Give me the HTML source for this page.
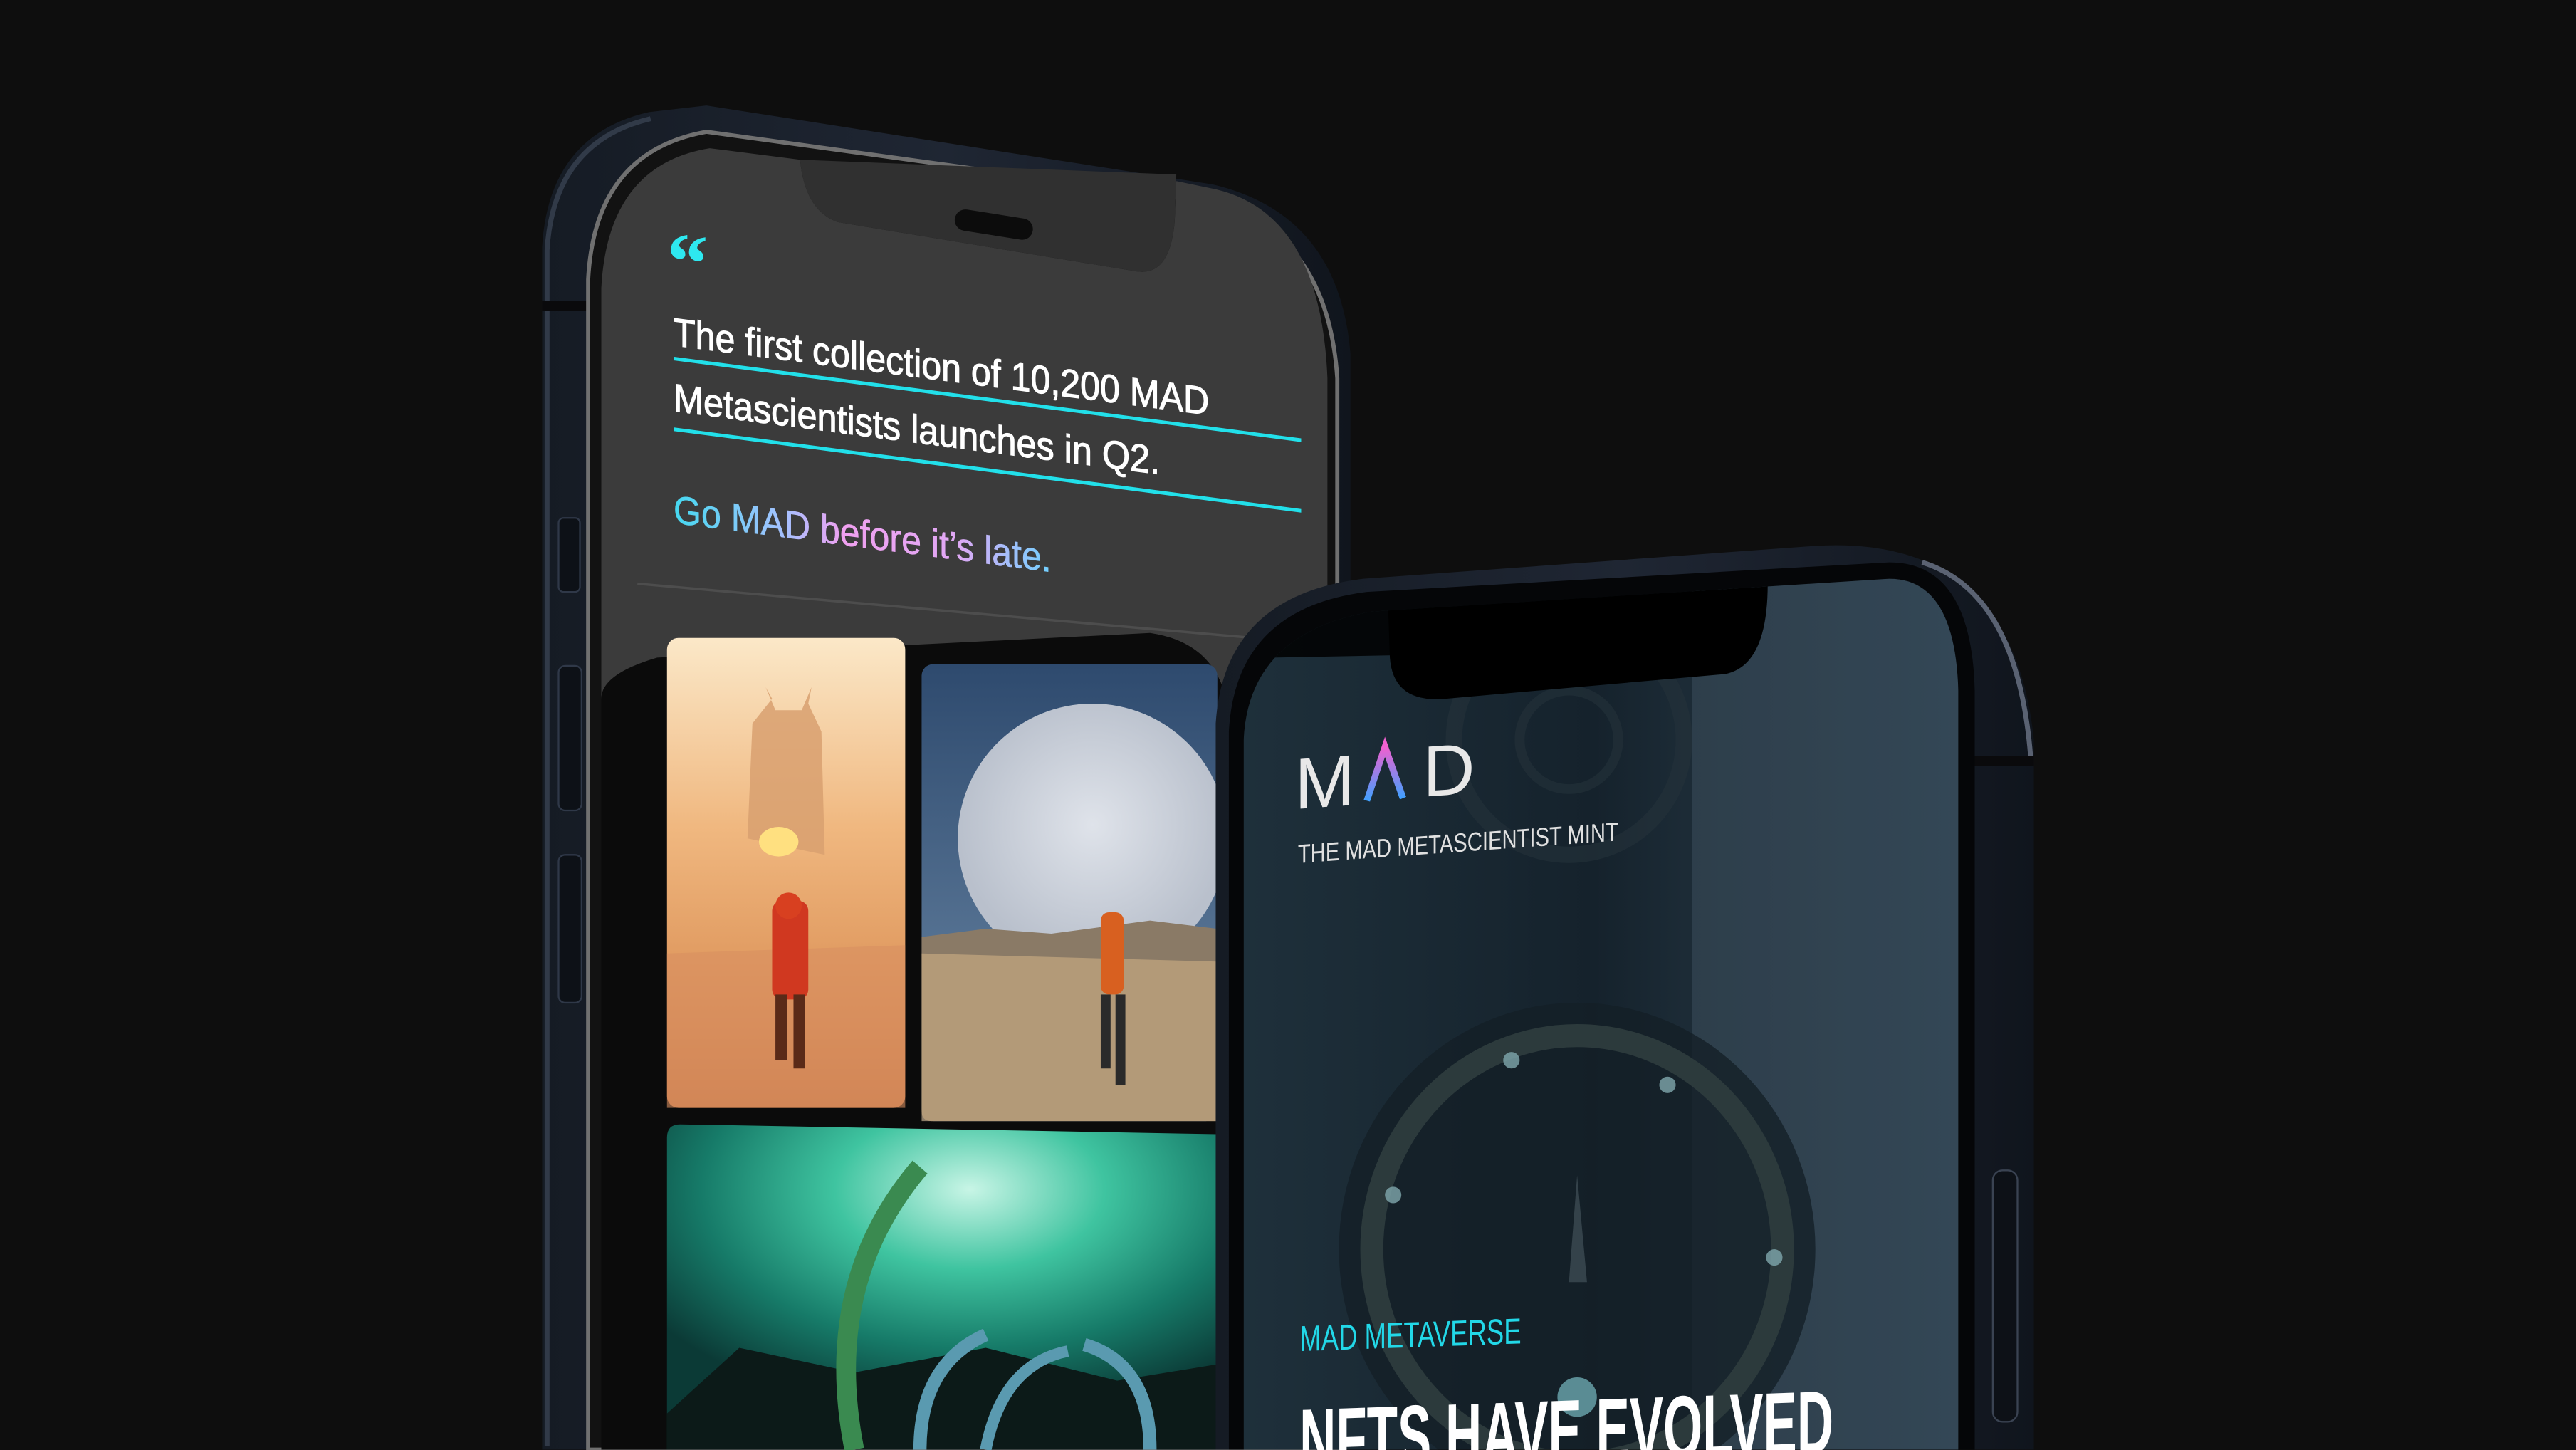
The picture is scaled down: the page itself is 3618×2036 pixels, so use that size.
<!DOCTYPE html>
<html><head><meta charset="utf-8"><style>
html,body{margin:0;padding:0;background:#0e0e0e;width:3618px;height:2036px;overflow:hidden}
svg{display:block}
</style></head><body>
<svg width="3618" height="2036" viewBox="0 0 1568 882" xmlns="http://www.w3.org/2000/svg">
<defs>
<linearGradient id="go" x1="0" x2="1"><stop offset="0" stop-color="#45d8f0"/><stop offset="0.3" stop-color="#a8c0ff"/><stop offset="0.45" stop-color="#f0a0f0"/><stop offset="0.75" stop-color="#e0a8f4"/><stop offset="1" stop-color="#70d0ff"/></linearGradient>
<linearGradient id="la" x1="0" y1="0" x2="0" y2="1"><stop offset="0" stop-color="#f060d0"/><stop offset="1" stop-color="#40a0ff"/></linearGradient>
<linearGradient id="rs" x1="0" y1="0" x2="1" y2="0"><stop offset="0" stop-color="#1f313c"/><stop offset="0.5" stop-color="#15222c"/><stop offset="0.62" stop-color="#1c2b36"/><stop offset="1" stop-color="#243745"/></linearGradient>
<linearGradient id="des" x1="0" y1="0" x2="0" y2="1"><stop offset="0" stop-color="#fbe8c8"/><stop offset="0.4" stop-color="#f0b880"/><stop offset="0.7" stop-color="#e09a60"/><stop offset="1" stop-color="#c87848"/></linearGradient>
<linearGradient id="sky" x1="0" y1="0" x2="0" y2="1"><stop offset="0" stop-color="#2e4a6e"/><stop offset="1" stop-color="#6d8aa8"/></linearGradient>
<radialGradient id="moon" cx="0.5" cy="0.45" r="0.5"><stop offset="0" stop-color="#dfe3ea"/><stop offset="1" stop-color="#b9c0cc"/></radialGradient>
<radialGradient id="neb" cx="0.55" cy="0.2" r="0.7"><stop offset="0" stop-color="#c8f5e6"/><stop offset="0.35" stop-color="#3fc4a0"/><stop offset="0.7" stop-color="#167a68"/><stop offset="1" stop-color="#0b3a36"/></radialGradient>
<linearGradient id="frame" x1="0" x2="1"><stop offset="0" stop-color="#151b24"/><stop offset="0.5" stop-color="#1f2633"/><stop offset="1" stop-color="#10151d"/></linearGradient>
<clipPath id="rsc"><path d="M757,882 L757,450 Q760,385 835,372 L1150,352 Q1190,352 1192,420 L1192,882 Z"/></clipPath>
</defs>
<rect width="1568" height="882" fill="#0e0e0e"/>

<!-- LEFT PHONE -->
<path d="M330,882 L330,150 Q334,82 395,68 L430,64 L738,112 Q815,130 822,215 L822,882 Z" fill="url(#frame)"/>
<path d="M333,880 L333,152 Q337,86 396,72" stroke="#313a48" stroke-width="3" fill="none"/>
<rect x="330" y="183" width="33" height="6" fill="#0a0a0c"/>
<rect x="340" y="315" width="13" height="45" rx="3" fill="#0d1117" stroke="#2f3848"/>
<rect x="340" y="405" width="14" height="88" rx="4" fill="#0d1117" stroke="#2f3848"/>
<rect x="340" y="520" width="14" height="90" rx="4" fill="#0d1117" stroke="#2f3848"/>
<path d="M358,882 L358,170 Q362,92 430,80 L735,122 Q808,140 814,230 L814,882 Z" fill="#121212" stroke="#707070" stroke-width="2.5"/>
<path d="M366,882 L366,175 Q370,100 432,90 L487,97 Q490,128 510,135 L692,165 Q712,168 715,135 L716,110 L740,115 Q804,130 808,230 L808,882 Z" fill="#3b3b3b"/>
<path d="M487,97 Q490,128 510,135 L692,165 Q712,168 715,135 L716,106 Z" fill="#303030"/>
<rect x="581" y="130" width="48" height="13" rx="6.5" fill="#0c0c0c" transform="rotate(9 605 136)"/>
<g transform="matrix(1,0.13,0,1,0,-53.3)">
<text x="406" y="175" font-family="Liberation Serif,serif" font-weight="bold" font-size="50" fill="#2ee8f0">“</text>
<text x="410" y="210" font-family="Liberation Sans,sans-serif" font-size="24" fill="#fff" stroke="#fff" stroke-width="0.5" textLength="326" lengthAdjust="spacingAndGlyphs">The first collection of 10,200 MAD</text>
<line x1="410" y1="218" x2="792" y2="218" stroke="#22e0ea" stroke-width="2.2"/>
<text x="410" y="250" font-family="Liberation Sans,sans-serif" font-size="24" fill="#fff" stroke="#fff" stroke-width="0.5" textLength="296" lengthAdjust="spacingAndGlyphs">Metascientists launches in Q2.</text>
<line x1="410" y1="261" x2="792" y2="261" stroke="#22e0ea" stroke-width="2.2"/>
<text x="410" y="318" font-family="Liberation Sans,sans-serif" font-size="24" fill="url(#go)" stroke="url(#go)" stroke-width="0.3" textLength="230" lengthAdjust="spacingAndGlyphs">Go MAD before it’s late.</text>
</g>
<line x1="388" y1="355" x2="808" y2="392" stroke="#4d4d4d" stroke-width="1.5"/>
<path d="M366,882 L366,425 Q366,410 400,400 L700,385 Q735,390 745,420 L745,882 Z" fill="#0b0b0b"/>
<g>
<rect x="406" y="388" width="145" height="286" rx="7" fill="url(#des)"/>
<path d="M406,580 L551,575 L551,674 L406,674 Z" fill="#d89060" opacity="0.6"/>
<path d="M455,510 L458,440 L470,425 L466,418 L472,432 L488,432 L494,418 L492,428 L500,445 L502,520 Z" fill="#d8a070" opacity="0.85"/>
<ellipse cx="474" cy="512" rx="12" ry="9" fill="#ffe080"/>
<rect x="470" y="548" width="22" height="60" rx="6" fill="#d03820"/>
<circle cx="480" cy="551" r="8" fill="#d84020"/>
<rect x="472" y="605" width="7" height="40" fill="#5a2a18"/>
<rect x="483" y="605" width="7" height="45" fill="#5a2a18"/>
</g>
<g>
<rect x="561" y="404" width="180" height="278" rx="7" fill="url(#sky)"/>
<circle cx="665" cy="510" r="82" fill="url(#moon)"/>
<path d="M561,570 L600,565 L640,568 L700,560 L741,565 L741,682 L561,682 Z" fill="#8a7a66"/>
<path d="M561,580 L741,585 L741,682 L567,682 Q561,682 561,676 Z" fill="#b39a78"/>
<rect x="670" y="555" width="14" height="50" rx="5" fill="#d86020"/>
<rect x="670" y="605" width="6" height="45" fill="#2a2a2a"/><rect x="679" y="605" width="6" height="55" fill="#2a2a2a"/>
</g>
<g>
<path d="M406,692 Q406,684 414,684 L741,690 L741,882 L406,882 Z" fill="url(#neb)"/>
<path d="M406,860 L450,820 L520,835 L600,820 L680,840 L741,830 L741,882 L406,882 Z" fill="#0c1a18"/>
<path d="M520,882 Q500,780 560,710" stroke="#3a8a50" stroke-width="12" fill="none"/>
<path d="M560,882 Q560,830 600,812" stroke="#5a9ab0" stroke-width="8" fill="none"/>
<path d="M600,882 Q610,830 650,822" stroke="#5a9ab0" stroke-width="7" fill="none"/>
<path d="M700,882 Q700,830 660,818" stroke="#5a9ab0" stroke-width="8" fill="none"/>
</g>

<!-- RIGHT PHONE -->
<path d="M740,882 L740,440 Q745,362 830,352 L1105,332 Q1225,325 1238,450 L1238,882 Z" fill="url(#frame)"/>
<path d="M1170,342 Q1228,360 1236,460" stroke="#5a6272" stroke-width="3" fill="none"/>
<rect x="1200" y="460" width="38" height="6" fill="#0a0a0c"/>
<rect x="1213" y="712" width="15" height="153" rx="6" fill="#0d1117" stroke="#3a4352"/>
<path d="M748,882 L748,445 Q752,370 832,360 L1150,342 Q1200,342 1202,420 L1202,882 Z" fill="#050608"/>
<g clip-path="url(#rsc)">
<rect x="740" y="340" width="460" height="560" fill="url(#rs)"/>
<rect x="1030" y="340" width="170" height="560" fill="#6d8696" opacity="0.22"/>
<circle cx="955" cy="450" r="70" fill="none" stroke="#24323b" stroke-width="10" opacity="0.6"/>
<circle cx="955" cy="450" r="30" fill="none" stroke="#24323b" stroke-width="6" opacity="0.6"/>
<ellipse cx="960" cy="760" rx="145" ry="150" fill="#141f27" opacity="0.8"/>
<ellipse cx="960" cy="760" rx="125" ry="130" fill="none" stroke="#2c3a3c" stroke-width="14"/>
<circle cx="920" cy="645" r="5" fill="#7fa8ac" opacity="0.8"/><circle cx="1015" cy="660" r="5" fill="#7fa8ac" opacity="0.8"/>
<circle cx="848" cy="727" r="5" fill="#7fa8ac" opacity="0.8"/><circle cx="1080" cy="765" r="5" fill="#7fa8ac" opacity="0.8"/>
<circle cx="960" cy="850" r="12" fill="#5a8c94"/>
<path d="M955,780 L960,715 L966,780 Z" fill="#34424a"/>
<path d="M775,340 L1030,340 L1030,395 L775,400 Z" fill="#000" opacity="0.85"/>
<path d="M845,370 L1076,355 Q1076,405 1050,410 L880,425 Q848,428 846,400 Z" fill="#000"/>
</g>
<g transform="matrix(1,-0.07,0,1,0,55.3)">
<text x="788" y="492" font-family="Liberation Sans,sans-serif" font-size="44" fill="#e8e8e8">M</text>
<path d="M832,490 L843,458 L854,490" stroke="url(#la)" stroke-width="4" fill="none"/>
<text x="866" y="490" font-family="Liberation Sans,sans-serif" font-size="44" fill="#e8e8e8">D</text>
<text x="790" y="525" font-family="Liberation Sans,sans-serif" font-size="16" fill="#e0e0e0" textLength="195" lengthAdjust="spacingAndGlyphs">THE MAD METASCIENTIST MINT</text>
</g>
<g transform="matrix(1,-0.035,0,1,0,27.7)">
<text x="791" y="822" font-family="Liberation Sans,sans-serif" font-size="22" fill="#22d8e8" textLength="135" lengthAdjust="spacingAndGlyphs">MAD METAVERSE</text>
<text x="791" y="895" font-family="Liberation Sans,sans-serif" font-weight="bold" font-size="54" fill="#ffffff" textLength="325" lengthAdjust="spacingAndGlyphs">NFTS HAVE EVOLVED</text>
</g>
</svg>
</body></html>
